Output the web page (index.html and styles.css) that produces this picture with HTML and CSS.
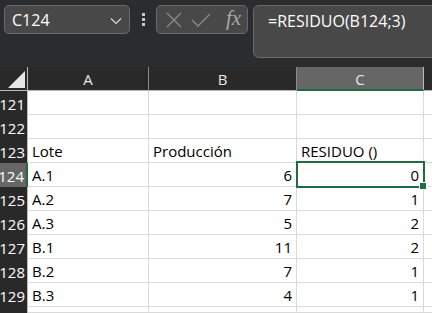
FILE: index.html
```html
<!DOCTYPE html>
<html>
<head>
    <title>RESIDUO</title>
    <link rel="stylesheet" href="styles.css">
</head>
<body>
    <div class="toolbar">
        <div class="namebox">
            <span>C124</span>
            <svg class="chevron" width="12" height="8" viewBox="0 0 12 8"><path d="M1 1.5 L6 6.5 L11 1.5" fill="none" stroke="#d8d8d8" stroke-width="1.2"/></svg>
        </div>
        <div class="dots"><i></i><i></i><i></i></div>
        <div class="fxbox">
            <svg width="18" height="18" viewBox="0 0 18 18"><path d="M2 2 L16 16 M16 2 L2 16" stroke="#8a8a8a" stroke-width="1.3"/></svg>
            <svg width="20" height="16" viewBox="0 0 20 16"><path d="M1 8 L7 14 L19 2" fill="none" stroke="#8a8a8a" stroke-width="1.3"/></svg>
            <span class="fx">fx</span>
        </div>
        <div class="formula">=RESIDUO(B124;3)</div>
    </div>

    <div class="sheet">
        <div class="corner"><span class="tri"></span></div>
        <div class="colhead">A</div>
        <div class="colhead">B</div>
        <div class="colhead active">C</div>
        <div class="colhead rest"></div>

        <div class="rowhead">121</div><div class="cell"></div><div class="cell"></div><div class="cell"></div><div class="cell rest"></div>
        <div class="rowhead">122</div><div class="cell"></div><div class="cell"></div><div class="cell"></div><div class="cell rest"></div>
        <div class="rowhead">123</div><div class="cell">Lote</div><div class="cell">Producción</div><div class="cell">RESIDUO ()</div><div class="cell rest"></div>
        <div class="rowhead active">124</div><div class="cell">A.1</div><div class="cell num">6</div><div class="cell num selected">0</div><div class="cell rest"></div>
        <div class="rowhead">125</div><div class="cell">A.2</div><div class="cell num">7</div><div class="cell num">1</div><div class="cell rest"></div>
        <div class="rowhead">126</div><div class="cell">A.3</div><div class="cell num">5</div><div class="cell num">2</div><div class="cell rest"></div>
        <div class="rowhead">127</div><div class="cell">B.1</div><div class="cell num">11</div><div class="cell num">2</div><div class="cell rest"></div>
        <div class="rowhead">128</div><div class="cell">B.2</div><div class="cell num">7</div><div class="cell num">1</div><div class="cell rest"></div>
        <div class="rowhead">129</div><div class="cell">B.3</div><div class="cell num">4</div><div class="cell num">1</div><div class="cell rest"></div>
        <div class="rowhead"></div><div class="cell"></div><div class="cell"></div><div class="cell"></div><div class="cell rest"></div>
    </div>
</body>
</html>
```

FILE: styles.css
```css
body {
    font-family: 'Open Sans', 'Noto Sans', sans-serif;
    background-color: #2b2c30;
    color: #000000;
    margin: 0;
    width: 432px;
    height: 313px;
    overflow: hidden;
}
.toolbar {
    display: flex;
    align-items: flex-start;
    height: 67px;
    padding: 5px 0 0 4px;
    box-sizing: border-box;
}
.namebox {
    width: 126px;
    height: 29px;
    box-sizing: border-box;
    border: 1px solid #6a6a6a;
    border-radius: 5px;
    background-color: #484848;
    color: #ffffff;
    font-size: 16px;
    display: flex;
    align-items: center;
    justify-content: space-between;
    padding: 0 7px 0 7px;
}
.chevron {
    margin-top: 2px;
}
.dots {
    width: 26px;
    height: 29px;
    display: flex;
    flex-direction: column;
    align-items: center;
    justify-content: center;
    gap: 2px;
}
.dots i {
    width: 3px;
    height: 3px;
    background-color: #c8c8c8;
}
.fxbox {
    width: 92px;
    height: 29px;
    box-sizing: border-box;
    border: 1px solid #6a6a6a;
    border-radius: 5px;
    background-color: #484848;
    display: flex;
    align-items: center;
    gap: 8px;
    padding-left: 8px;
}
.fx {
    font-family: 'Liberation Serif', serif;
    font-style: italic;
    font-size: 21px;
    color: #a8a8a8;
    margin-left: 7px;
    margin-top: -2px;
}
.formula {
    flex: 1;
    margin-left: 5px;
    margin-right: -10px;
    height: 53px;
    box-sizing: border-box;
    border: 1px solid #6a6a6a;
    border-radius: 6px;
    background-color: #484848;
    color: #ffffff;
    font-size: 16px;
    padding: 4px 0 0 14px;
}
.sheet {
    display: grid;
    grid-template-columns: 28px 121px 148px 127px 1fr;
    grid-template-rows: repeat(10, 24px) 6px;
    font-size: 15px;
}
.corner, .colhead {
    background-color: #292929;
    border-bottom: 1px solid #b8b8b8;
    box-sizing: border-box;
}
.corner {
    border-right: 1px solid #b8b8b8;
    position: relative;
}
.tri {
    position: absolute;
    right: 2px;
    bottom: 2px;
    width: 0;
    height: 0;
    border-left: 17px solid transparent;
    border-bottom: 17px solid #e6e6e6;
}
.colhead {
    color: #e8e8e8;
    border-right: 1px solid #8a8a8a;
    display: flex;
    align-items: center;
    justify-content: center;
    padding-top: 1px;
}
.colhead.active {
    background-color: #666666;
    border-right-color: #bcbcbc;
    border-bottom: 2px solid #1e6b41;
}
.colhead.rest {
    border-right: none;
    background-color: #2b2b2b;
}
.rowhead {
    background-color: #292929;
    color: #ffffff;
    border-right: 1px solid #b8b8b8;
    box-sizing: border-box;
    display: flex;
    align-items: flex-end;
    justify-content: flex-end;
    padding: 0 2px 1px 0;
    line-height: 20px;
    overflow: hidden;
    white-space: nowrap;
}
.rowhead.active {
    background-color: #666666;
    border-right: 2px solid #1e6b41;
}
.cell {
    background-color: #ffffff;
    border-right: 1px solid #dadada;
    border-bottom: 1px solid #dadada;
    box-sizing: border-box;
    display: flex;
    align-items: flex-end;
    padding: 0 4px 1px 4px;
    line-height: 20px;
    white-space: nowrap;
}
.cell.num {
    justify-content: flex-end;
}
.cell.rest {
    border-right: none;
}
.cell.selected {
    position: relative;
}
.cell.selected::after {
    content: "";
    position: absolute;
    left: -1px;
    top: -2px;
    right: -2px;
    bottom: -2px;
    border: 2px solid #1e6b41;
}
.cell.selected::before {
    content: "";
    position: absolute;
    right: -4px;
    bottom: -4px;
    width: 6px;
    height: 6px;
    background-color: #1e6b41;
    border: 1px solid #ffffff;
    z-index: 2;
}
```
